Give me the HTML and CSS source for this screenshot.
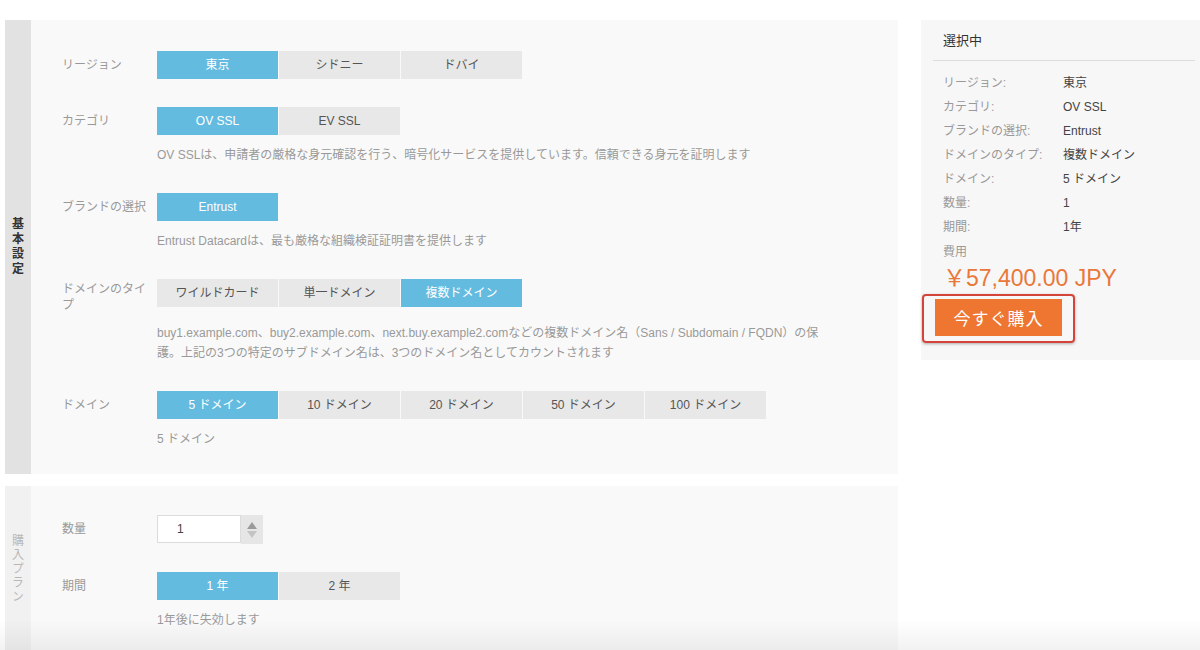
FILE: index.html
```html
<!DOCTYPE html>
<html lang="ja">
<head>
    <meta charset="UTF-8">
    <meta name="viewport" content="width=device-width, initial-scale=1.0">
    <title>SSL証明書の購入</title>
    <link rel="stylesheet" href="styles.css">
</head>
<body>
    <div class="page">
        <div class="main">
            <section class="panel">
                <div class="panel-side"><span>基本設定</span></div>
                <div class="panel-body">
                    <div class="field">
                        <div class="field-head">
                            <div class="field-label">リージョン</div>
                            <div class="options">
                                <div class="option active">東京</div>
                                <div class="option">シドニー</div>
                                <div class="option">ドバイ</div>
                            </div>
                        </div>
                    </div>

                    <div class="field">
                        <div class="field-head">
                            <div class="field-label">カテゴリ</div>
                            <div class="options">
                                <div class="option active">OV SSL</div>
                                <div class="option">EV SSL</div>
                            </div>
                        </div>
                        <div class="field-desc">OV SSLは、申請者の厳格な身元確認を行う、暗号化サービスを提供しています。信頼できる身元を証明します</div>
                    </div>

                    <div class="field">
                        <div class="field-head">
                            <div class="field-label">ブランドの選択</div>
                            <div class="options">
                                <div class="option active">Entrust</div>
                            </div>
                        </div>
                        <div class="field-desc">Entrust Datacardは、最も厳格な組織検証証明書を提供します</div>
                    </div>

                    <div class="field">
                        <div class="field-head">
                            <div class="field-label wrap">ドメインのタイプ</div>
                            <div class="options">
                                <div class="option">ワイルドカード</div>
                                <div class="option">単一ドメイン</div>
                                <div class="option active">複数ドメイン</div>
                            </div>
                        </div>
                        <div class="field-desc">buy1.example.com、buy2.example.com、next.buy.example2.comなどの複数ドメイン名（Sans / Subdomain / FQDN）の保護。上記の3つの特定のサブドメイン名は、3つのドメイン名としてカウントされます</div>
                    </div>

                    <div class="field last">
                        <div class="field-head">
                            <div class="field-label">ドメイン</div>
                            <div class="options">
                                <div class="option active">5 ドメイン</div>
                                <div class="option">10 ドメイン</div>
                                <div class="option">20 ドメイン</div>
                                <div class="option">50 ドメイン</div>
                                <div class="option">100 ドメイン</div>
                            </div>
                        </div>
                        <div class="field-desc">5 ドメイン</div>
                    </div>
                </div>
            </section>

            <section class="panel plan">
                <div class="panel-side"><span>購入プラン</span></div>
                <div class="panel-body">
                    <div class="field">
                        <div class="field-head">
                            <div class="field-label">数量</div>
                            <div class="number-input">
                                <div class="number-value">1</div>
                                <div class="spinner">
                                    <svg width="10" height="7" viewBox="0 0 10 7"><path d="M5 0 L10 7 L0 7 Z" fill="#9a9a9a"/></svg>
                                    <svg width="10" height="7" viewBox="0 0 10 7"><path d="M0 0 L10 0 L5 7 Z" fill="#c4c4c4"/></svg>
                                </div>
                            </div>
                        </div>
                    </div>

                    <div class="field last">
                        <div class="field-head">
                            <div class="field-label">期間</div>
                            <div class="options">
                                <div class="option active">1 年</div>
                                <div class="option">2 年</div>
                            </div>
                        </div>
                        <div class="field-desc">1年後に失効します</div>
                    </div>
                </div>
            </section>
        </div>

        <aside class="summary">
            <div class="summary-title">選択中</div>
            <div class="summary-list">
                <div class="summary-row"><span class="key">リージョン:</span><span class="val">東京</span></div>
                <div class="summary-row"><span class="key">カテゴリ:</span><span class="val">OV SSL</span></div>
                <div class="summary-row"><span class="key">ブランドの選択:</span><span class="val">Entrust</span></div>
                <div class="summary-row"><span class="key">ドメインのタイプ:</span><span class="val">複数ドメイン</span></div>
                <div class="summary-row"><span class="key">ドメイン:</span><span class="val">5 ドメイン</span></div>
                <div class="summary-row"><span class="key">数量:</span><span class="val">1</span></div>
                <div class="summary-row"><span class="key">期間:</span><span class="val">1年</span></div>
                <div class="cost-label">費用</div>
                <div class="price">￥57,400.00 JPY</div>
            </div>
            <div class="buy-mark">
                <button class="buy-btn">今すぐ購入</button>
            </div>
        </aside>
    </div>

    <div class="bottom-shade"></div>
</body>
</html>
```

FILE: styles.css
```css
* {
    margin: 0;
    padding: 0;
    box-sizing: border-box;
}

body {
    background: #fff;
    color: #555;
    font-family: "Liberation Sans", "Noto Sans CJK JP", sans-serif;
    font-size: 12px;
    overflow: hidden;
}

.page {
    display: flex;
    align-items: flex-start;
    gap: 23px;
    padding: 20px 0 0 5px;
}

.main {
    width: 893px;
    display: flex;
    flex-direction: column;
    gap: 12px;
}

/* panels */
.panel {
    display: flex;
    background: #f9f9f9;
}

.panel-side {
    width: 26px;
    flex-shrink: 0;
    background: #e2e2e2;
    display: flex;
    align-items: center;
    justify-content: center;
}

.panel-side span {
    writing-mode: vertical-rl;
    font-family: "Noto Sans CJK JP", sans-serif;
    font-weight: 700;
    font-size: 12px;
    letter-spacing: 3px;
    color: #333;
}

.plan .panel-side {
    background: #f1f1f1;
}

.plan .panel-side span {
    font-weight: 400;
    color: #b8b8b8;
    letter-spacing: 2px;
}

.panel-body {
    flex: 1;
    padding: 31px 26px 25px 31px;
}

.plan .panel-body {
    padding-top: 29px;
    padding-bottom: 21px;
}

.field {
    margin-bottom: 28px;
}

.field.last {
    margin-bottom: 0;
}

.field-head {
    display: flex;
    align-items: flex-start;
}

.field-label {
    width: 95px;
    flex-shrink: 0;
    padding: 6px 8px 0 0;
    line-height: 16px;
    color: #999;
}

.field-label.wrap {
    padding-top: 2px;
}

.options {
    display: flex;
    gap: 1px;
}

.option {
    width: 121px;
    height: 28px;
    line-height: 28px;
    text-align: center;
    background: #e8e8e8;
    color: #555;
}

.option.active {
    background: #64bbe0;
    color: #fff;
}

.field-desc {
    max-width: 668px;
    margin: 10px 0 0 95px;
    line-height: 20px;
    color: #999;
}

/* quantity */
.number-input {
    display: flex;
}

.number-value {
    width: 84px;
    height: 28px;
    line-height: 26px;
    padding-left: 19px;
    background: #fff;
    border: 1px solid #dcdcdc;
    color: #444;
}

.spinner {
    width: 22px;
    height: 29px;
    background: #e6e6e6;
    display: flex;
    flex-direction: column;
    align-items: center;
    justify-content: center;
    gap: 2px;
}

/* summary */
.summary {
    width: 279px;
    background: #f7f7f7;
    padding: 0 5px 17px 12px;
}

.summary-title {
    height: 41px;
    line-height: 41px;
    padding: 0 10px;
    font-size: 13px;
    color: #333;
    border-bottom: 1px solid #dcdcdc;
}

.summary-list {
    padding: 10px 10px 0;
}

.summary-row {
    display: flex;
    line-height: 24px;
}

.summary-row .key {
    width: 120px;
    color: #999;
}

.summary-row .val {
    color: #444;
}

.cost-label {
    margin-top: 1px;
    line-height: 24px;
    color: #999;
}

.price {
    font-size: 23px;
    line-height: 28px;
    color: #e9783a;
}

.buy-mark {
    display: inline-block;
    margin: 2px 0 0 -11px;
    padding: 3px 11px 5px;
    border: 2px solid #d5443a;
    border-radius: 4px;
    box-shadow: 0 1px 3px rgba(0, 0, 0, 0.3);
}

.buy-btn {
    display: block;
    width: 127px;
    height: 37px;
    border: none;
    background: #ee7631;
    color: #fff;
    font-family: "Noto Sans CJK JP", sans-serif;
    font-size: 17px;
    letter-spacing: 1px;
}

.bottom-shade {
    position: fixed;
    left: 0;
    right: 0;
    bottom: 0;
    height: 30px;
    background: linear-gradient(to bottom, rgba(0, 0, 0, 0), rgba(0, 0, 0, 0.05));
    pointer-events: none;
}
```
